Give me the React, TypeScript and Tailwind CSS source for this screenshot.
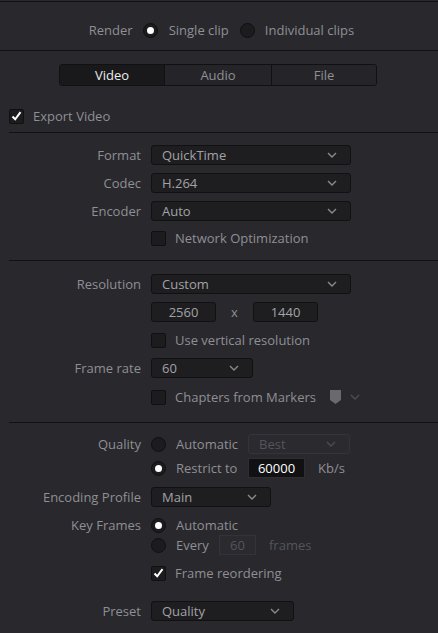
import React from "react";

const Chevron = ({ color = "#8a8a8a" }: { color?: string }) => (
  <svg width="10" height="6" viewBox="0 0 10 6" fill="none">
    <path d="M1 1 L5 5 L9 1" stroke={color} strokeWidth="1.4" />
  </svg>
);

const Select = ({ value, w, disabled }: { value: string; w: string; disabled?: boolean }) => (
  <div
    className={`${w} h-[20px] rounded-[3px] border flex items-center justify-between pl-[10px] pr-[13px] ${
      disabled ? "border-[#333338] bg-[#2a2a2f] text-[#55555a]" : "border-[#111113] bg-[#1e1e21] text-[#a2a2a6]"
    }`}
  >
    <span>{value}</span>
    <Chevron color={disabled ? "#4c4c50" : "#8a8a8e"} />
  </div>
);

const Radio = ({ on }: { on?: boolean }) => (
  <div className="w-[15px] h-[15px] rounded-full border border-[#101012] bg-[#1c1c1f] flex items-center justify-center shrink-0">
    {on && <div className="w-[7px] h-[7px] rounded-full bg-white" />}
  </div>
);

const Check = ({ on }: { on?: boolean }) => (
  <div className="w-[15px] h-[15px] rounded-[2px] border border-[#101012] bg-[#1c1c1f] flex items-center justify-center shrink-0">
    {on && (
      <svg width="11" height="10" viewBox="0 0 11 10">
        <path d="M1.5 5.5 L4.2 8.3 L9.5 1.2" stroke="white" strokeWidth="2" fill="none" />
      </svg>
    )}
  </div>
);

const Row = ({ label, children, mt }: { label?: string; children: React.ReactNode; mt: string }) => (
  <div className={`flex items-center h-[20px] ${mt}`}>
    <div className="w-[141px] text-right text-[#8f8f94] shrink-0">{label}</div>
    <div className="pl-[10px] flex items-center">{children}</div>
  </div>
);

export default function App() {
  return (
    <div
      className="w-[438px] h-[633px] bg-[#28282d] text-[13px] leading-none overflow-hidden"
      style={{ fontFamily: '"Open Sans", "Noto Sans", sans-serif' }}
    >
      <div className="h-px" />
      <div className="border-t border-[#111113]" />
      <div className="flex items-center justify-center h-[20px] mt-[18px] pl-[5px] text-[#8f8f94]">
        <span className="mr-[10px]">Render</span>
        <Radio on />
        <span className="ml-[11px] mr-[11px]">Single clip</span>
        <Radio />
        <span className="ml-[10px]">Individual clips</span>
      </div>
      <div className="mt-[10px] border-t border-[#111113]" />

      <div className="ml-[59px] mt-[13px] w-[318px] h-[22px] flex border border-[#111113] rounded-[3px] overflow-hidden">
        <div className="w-[105px] bg-[#19191b] text-[#ececec] flex items-center justify-center border-r border-[#111113]">Video</div>
        <div className="w-[107px] bg-[#252529] text-[#8f8f94] flex items-center justify-center border-r border-[#111113]">Audio</div>
        <div className="flex-1 bg-[#252529] text-[#8f8f94] flex items-center justify-center">File</div>
      </div>

      <div className="flex items-center h-[20px] mt-[20px] ml-[9px] text-[#8f8f94]">
        <Check on />
        <span className="ml-[9px]">Export Video</span>
      </div>
      <div className="mt-[6px] ml-[9px] border-t border-[#111113]" />

      <Row label="Format" mt="mt-[12px]">
        <Select value="QuickTime" w="w-[200px]" />
      </Row>
      <Row label="Codec" mt="mt-[8px]">
        <Select value="H.264" w="w-[200px]" />
      </Row>
      <Row label="Encoder" mt="mt-[8px]">
        <Select value="Auto" w="w-[200px]" />
      </Row>
      <Row mt="mt-[7px]">
        <Check />
        <span className="ml-[9px] text-[#8f8f94]">Network Optimization</span>
      </Row>
      <div className="mt-[12px] ml-[9px] border-t border-[#111113]" />

      <Row label="Resolution" mt="mt-[13px]">
        <Select value="Custom" w="w-[200px]" />
      </Row>
      <Row mt="mt-[8px]">
        <div className="w-[65px] h-[20px] rounded-[3px] border border-[#111113] bg-[#1e1e21] text-[#a2a2a6] flex items-center justify-center">2560</div>
        <span className="w-[37px] text-center text-[#8f8f94]">x</span>
        <div className="w-[65px] h-[20px] rounded-[3px] border border-[#111113] bg-[#1e1e21] text-[#a2a2a6] flex items-center justify-center">1440</div>
      </Row>
      <Row mt="mt-[8px]">
        <Check />
        <span className="ml-[9px] text-[#8f8f94]">Use vertical resolution</span>
      </Row>
      <Row label="Frame rate" mt="mt-[8px]">
        <Select value="60" w="w-[102px]" />
      </Row>
      <Row mt="mt-[9px]">
        <Check />
        <span className="ml-[9px] text-[#8f8f94]">Chapters from Markers</span>
        <svg className="ml-[14px]" width="11" height="14" viewBox="0 0 11 14">
          <path d="M0 0 H11 V10 L5.5 14 L0 10 Z" fill="#6a6a6e" />
        </svg>
        <span className="ml-[9px]">
          <Chevron color="#4e4e52" />
        </span>
      </Row>
      <div className="mt-[15px] ml-[9px] border-t border-[#111113]" />

      <Row label="Quality" mt="mt-[11px]">
        <Radio />
        <span className="ml-[10px] w-[72px] text-[#8f8f94]">Automatic</span>
        <Select value="Best" w="w-[102px]" disabled />
      </Row>
      <Row mt="mt-[4px]">
        <Radio on />
        <span className="ml-[10px] w-[72px] text-[#8f8f94]">Restrict to</span>
        <div className="w-[57px] h-[20px] border border-[#2e2e33] bg-[#111113] text-white flex items-center justify-center">60000</div>
        <span className="ml-[13px] text-[#8f8f94]">Kb/s</span>
      </Row>
      <Row label="Encoding Profile" mt="mt-[9px]">
        <Select value="Main" w="w-[120px]" />
      </Row>
      <Row label="Key Frames" mt="mt-[8px]">
        <Radio on />
        <span className="ml-[10px] text-[#8f8f94]">Automatic</span>
      </Row>
      <Row mt="mt-[0px]">
        <Radio />
        <span className="ml-[10px] w-[43px] text-[#8f8f94]">Every</span>
        <div className="w-[37px] h-[20px] border border-[#333338] bg-[#2a2a2f] text-[#55555a] flex items-center justify-center">60</div>
        <span className="ml-[13px] text-[#55555a]">frames</span>
      </Row>
      <Row mt="mt-[8px]">
        <Check on />
        <span className="ml-[9px] text-[#8f8f94]">Frame reordering</span>
      </Row>
      <Row label="Preset" mt="mt-[18px]">
        <Select value="Quality" w="w-[143px]" />
      </Row>
    </div>
  );
}
